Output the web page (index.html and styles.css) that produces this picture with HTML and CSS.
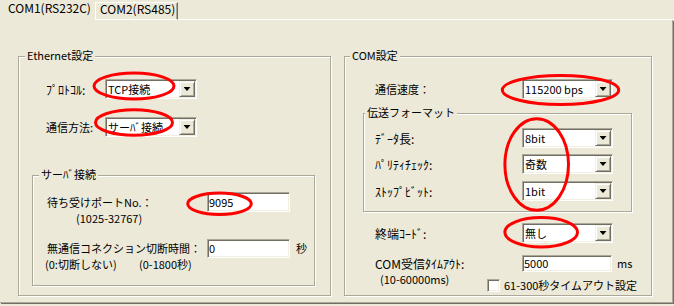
FILE: index.html
```html
<!DOCTYPE html>
<html lang="ja">
<head>
<meta charset="utf-8">
<title>COM設定</title>
<link rel="stylesheet" href="styles.css">
</head>
<body>
<div class="tabs">
  <div class="tab-active">COM1(RS232C)</div>
  <div class="tab-idle">COM2(RS485)</div>
  <div class="tab-fill"></div>
</div>
<div class="panel">
  <section class="group group-eth">
    <div class="gtitle gtitle-eth">Ethernet設定</div>
    <div class="row row-proto">
      <span class="lbl lbl-eth hw">ﾌﾟﾛﾄｺﾙ:</span>
      <div class="combo combo-eth"><span class="combo-text">TCP接続</span><span class="combo-btn"></span></div>
    </div>
    <div class="row row-method">
      <span class="lbl lbl-eth">通信方法:</span>
      <div class="combo combo-eth"><span class="combo-text">サーﾊﾞ接続</span><span class="combo-btn"></span></div>
    </div>
    <section class="group group-srv">
      <div class="gtitle gtitle-srv">サーﾊﾞ接続</div>
      <div class="row row-port">
        <span class="lbl lbl-srv">待ち受けポートNo.：</span>
        <div class="field field-srv">9095</div>
      </div>
      <div class="note note-port">(1025-32767)</div>
      <div class="row row-idle">
        <span class="lbl lbl-srv">無通信コネクション切断時間：</span>
        <div class="field field-srv">0</div>
        <span class="unit unit-sec">秒</span>
      </div>
      <div class="note-row">
        <span class="note-a">(0:切断しない)</span>
        <span class="note-b">(0-1800秒)</span>
      </div>
    </section>
  </section>

  <section class="group group-com">
    <div class="gtitle gtitle-com">COM設定</div>
    <div class="row row-speed">
      <span class="lbl lbl-com">通信速度：</span>
      <div class="combo combo-com"><span class="combo-text">115200 bps</span><span class="combo-btn"></span></div>
    </div>
    <section class="group group-fmt">
      <div class="gtitle gtitle-fmt">伝送フォーマット</div>
      <div class="row row-f1">
        <span class="lbl lbl-fmt hw">ﾃﾞｰﾀ長:</span>
        <div class="combo combo-com"><span class="combo-text">8bit</span><span class="combo-btn"></span></div>
      </div>
      <div class="row row-f2">
        <span class="lbl lbl-fmt hw">ﾊﾟﾘﾃｨﾁｪｯｸ:</span>
        <div class="combo combo-com"><span class="combo-text">奇数</span><span class="combo-btn"></span></div>
      </div>
      <div class="row row-f3">
        <span class="lbl lbl-fmt hw">ｽﾄｯﾌﾟﾋﾞｯﾄ:</span>
        <div class="combo combo-com"><span class="combo-text">1bit</span><span class="combo-btn"></span></div>
      </div>
    </section>
    <div class="row row-term">
      <span class="lbl lbl-com hw">終端ｺｰﾄﾞ:</span>
      <div class="combo combo-com"><span class="combo-text">無し</span><span class="combo-btn"></span></div>
    </div>
    <div class="row row-tmo">
      <span class="lbl lbl-com hw">COM受信ﾀｲﾑｱｳﾄ:</span>
      <div class="field field-tmo">5000</div>
      <span class="unit unit-ms">ms</span>
    </div>
    <div class="row-last">
      <span class="note-tmo">(10-60000ms)</span>
      <label class="chk-row"><span class="chk"></span><span class="chk-text">61-300秒タイムアウト設定</span></label>
    </div>
  </section>
</div>

<svg class="marks" width="674" height="306" viewBox="0 0 674 306" aria-hidden="true">
  <g fill="none" stroke="#ff0000" stroke-width="3">
    <ellipse cx="134" cy="86" rx="40" ry="13"/>
    <ellipse cx="134" cy="122.5" rx="38.5" ry="12.7"/>
    <ellipse cx="219.5" cy="203.8" rx="31.8" ry="10.7"/>
    <ellipse cx="560.5" cy="90" rx="58.2" ry="14.5"/>
    <ellipse cx="536.7" cy="164.5" rx="31.8" ry="45.7"/>
    <ellipse cx="541.2" cy="232.2" rx="36.3" ry="14.7"/>
  </g>
</svg>
</body>
</html>
```
FILE: styles.css
```css
html, body {
  margin: 0;
  padding: 0;
}
body {
  width: 674px;
  height: 306px;
  overflow: hidden;
  position: relative;
  background: #ECE9D8;
  color: #000;
  font-family: "Noto Sans CJK JP", "Noto Sans", sans-serif;
  font-size: 11px;
  line-height: 13px;
}

/* ---------- tabs ---------- */
.tabs {
  display: flex;
  height: 20px;
}
.tab-active {
  box-sizing: border-box;
  width: 95px;
  height: 20px;
  padding: 1px 0 0 8px;
  font-size: 12px;
  white-space: nowrap;
}
.tab-idle {
  box-sizing: border-box;
  width: 83px;
  height: 18px;
  margin-top: 2px;
  padding-left: 4px;
  font-size: 12px;
  line-height: 12px;
  white-space: nowrap;
  border-left: 1px solid #fff;
  border-top: 1px solid #fff;
  border-right: 1px solid #716F64;
  border-bottom: 1px solid #fff;
  box-shadow: inset -1px 0 0 #ACA899;
}
.tab-fill {
  flex: 1;
  box-sizing: border-box;
  height: 20px;
  border-bottom: 1px solid #fff;
}

/* ---------- panel ---------- */
.panel {
  box-sizing: border-box;
  width: 673px;
  height: 283px;
  padding: 36px 0 0 18px;
  display: flex;
  align-items: flex-start;
  gap: 13px;
  border-right: 1px solid #ACA899;
  border-bottom: 1px solid #ACA899;
  box-shadow: 1px 1px 0 #716F64;
}

/* ---------- group boxes ---------- */
.group {
  box-sizing: border-box;
  display: flex;
  flex-direction: column;
  align-items: flex-start;
  border: 1px solid #ACA899;
  box-shadow: inset 1px 1px 0 #fff, 1px 1px 0 #fff;
}
.gtitle {
  margin-top: -8px;
  padding: 0 2px;
  background: #ECE9D8;
  white-space: nowrap;
}
.group-eth { width: 313px; height: 240px; }
.gtitle-eth { margin-left: 6px; }
.group-com { width: 308px; height: 240px; }
.gtitle-com { margin-left: 5px; }
.group-srv {
  width: 283px;
  height: 111px;
  margin: 38px 0 0 13px;
}
.gtitle-srv { margin-left: 6px; }
.group-fmt {
  width: 269px;
  height: 99px;
  margin: 14px 0 0 18px;
}
.gtitle-fmt { margin-left: 1px; }

/* ---------- rows ---------- */
.row {
  display: flex;
  align-items: center;
  height: 20px;
}
.lbl { white-space: nowrap; }
.hw { font-size: 12px; }
.lbl-eth { margin-left: 27px; width: 59px; }
.lbl-srv { margin-left: 14px; width: 160px; }
.lbl-com { margin-left: 30px; width: 147px; }
.lbl-fmt { margin-left: 11px; width: 147px; }

.row-proto { margin-top: 17px; }
.row-method { margin-top: 18px; }
.row-port { margin-top: 11px; }
.row-idle { margin-top: 14px; height: 19px; }
.row-speed { margin-top: 17px; }
.row-f1 { margin-top: 9px; }
.row-f2 { margin-top: 6px; }
.row-f3 { margin-top: 7px; }
.row-term { margin-top: 11px; }
.row-tmo { margin-top: 12px; height: 17px; }

.note { white-space: nowrap; }
.note-port { margin-left: 43px; }
.note-row {
  display: flex;
  white-space: nowrap;
}
.note-a { margin-left: 12px; width: 94px; }

.unit { white-space: nowrap; }
.unit-sec { margin-left: 6px; }
.unit-ms { margin-left: 5px; }

.row-last {
  display: flex;
  align-items: flex-start;
  margin-top: 1px;
}
.note-tmo {
  margin-left: 35px;
  width: 107px;
  white-space: nowrap;
}
.chk-row {
  display: flex;
  align-items: center;
  margin-top: 6px;
}
.chk {
  box-sizing: border-box;
  width: 13px;
  height: 13px;
  background: #fff;
  border: 1px solid;
  border-color: #ACA899 #fff #fff #ACA899;
  box-shadow: inset 1px 1px 0 #716F64, inset -1px -1px 0 #F1EFE2;
}
.chk-text {
  margin-left: 4px;
  white-space: nowrap;
}

/* ---------- controls ---------- */
.combo, .field {
  box-sizing: border-box;
  background: #fff;
  border: 1px solid;
  border-color: #ACA899 #fff #fff #ACA899;
  box-shadow: inset 1px 1px 0 #716F64, inset -1px -1px 0 #F1EFE2;
  padding: 1px;
}
.combo {
  display: flex;
  height: 20px;
}
.combo-eth { width: 92px; }
.combo-com { width: 91px; }
.combo-text {
  flex: 1;
  padding-left: 1px;
  line-height: 16px;
  white-space: nowrap;
  overflow: hidden;
}
.combo-btn {
  box-sizing: border-box;
  width: 16px;
  height: 16px;
  display: flex;
  align-items: center;
  justify-content: center;
  background: #ECE9D8;
  border: 1px solid;
  border-color: #F1EFE2 #716F64 #716F64 #F1EFE2;
  box-shadow: inset 1px 1px 0 #fff, inset -1px -1px 0 #ACA899;
}
.combo-btn::after {
  content: "";
  width: 7px;
  height: 4px;
  background: #000;
  clip-path: polygon(0 0, 100% 0, 50% 100%);
}
.field {
  display: flex;
  align-items: center;
  white-space: nowrap;
}
.field-srv { width: 83px; height: 100%; }
.field-tmo { width: 90px; height: 17px; }

/* ---------- annotation overlay ---------- */
.marks {
  position: absolute;
  left: 0;
  top: 0;
  pointer-events: none;
}
```
